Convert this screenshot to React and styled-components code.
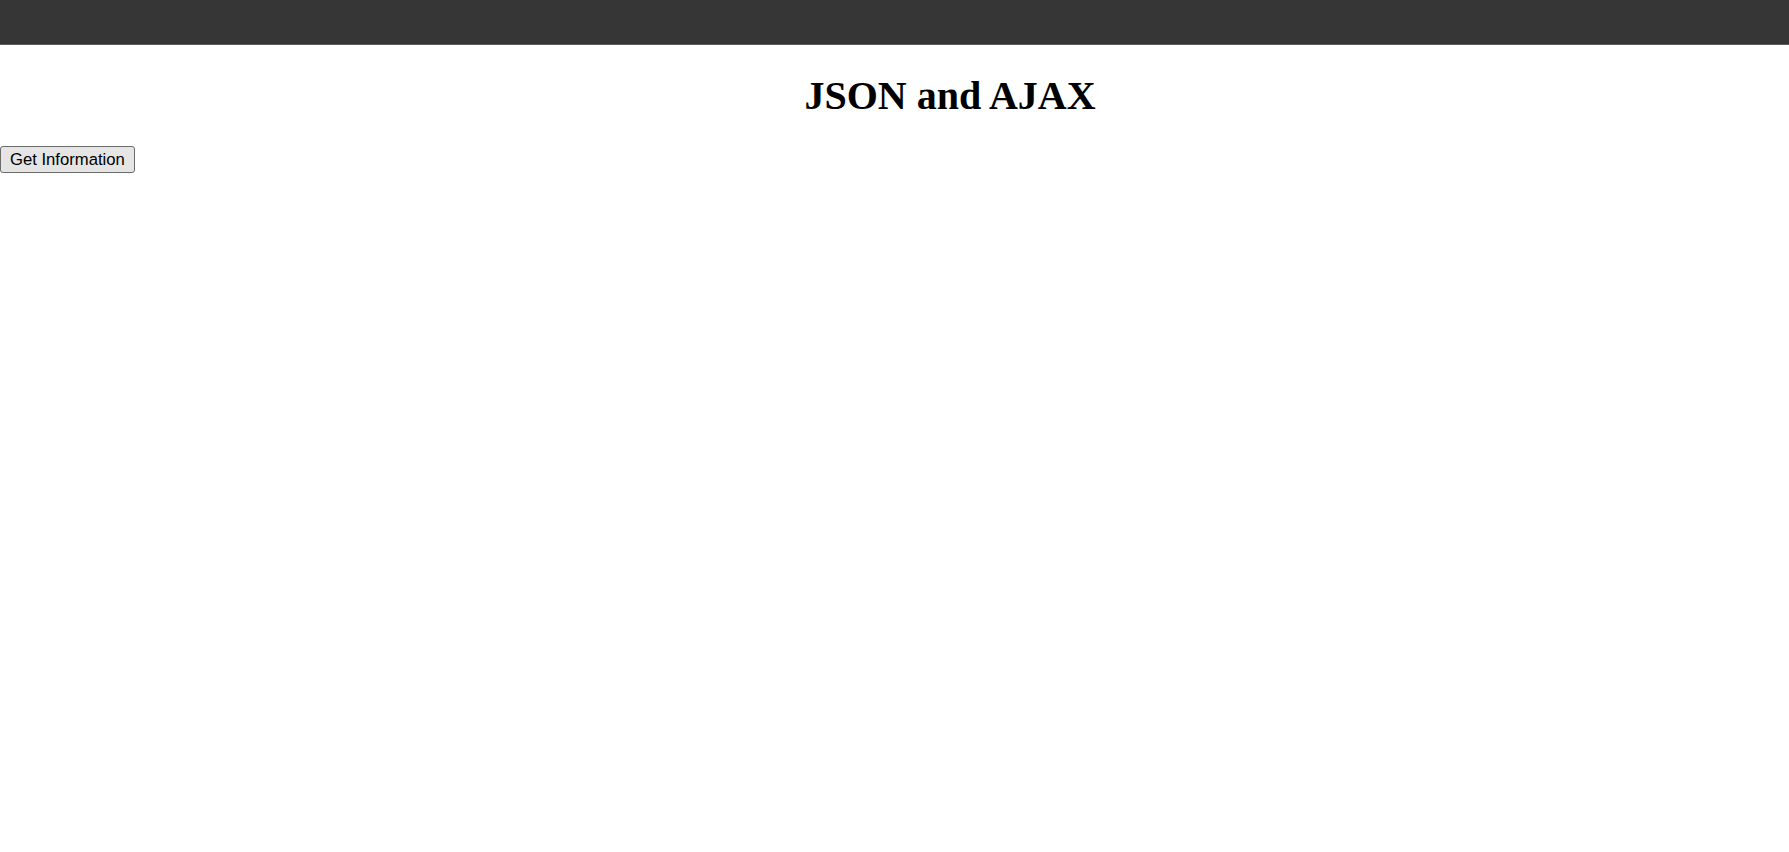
import React from "react";
import styled, { createGlobalStyle } from "styled-components";

const Global = createGlobalStyle`
  html, body { margin: 0; padding: 0; background: #ffffff; }
  body { font-family: "Liberation Serif", "Times New Roman", serif; font-size: 20px; }
`;

const TopBar = styled.header`
  height: 44px;
  background: #363636;
  border-bottom: 1px solid #5c5c5c;
`;

const Main = styled.main`
  display: flex;
  flex-direction: column;
  align-items: flex-start;
`;

const Title = styled.h1`
  align-self: stretch;
  margin: 29px 0 28px;
  padding-left: 111px;
  text-align: center;
  font-family: "Liberation Serif", "Times New Roman", serif;
  font-weight: bold;
  font-size: 40px;
  line-height: 44px;
  color: #000;
`;

const ActionButton = styled.button`
  height: 27px;
  padding: 0 9px;
  margin: 0;
  border: 1px solid #6b6b6b;
  border-radius: 3px;
  background: #e5e5e5;
  color: #000;
  font-family: "Liberation Sans", Arial, sans-serif;
  font-size: 16.67px;
  line-height: 19px;
  cursor: pointer;
`;

export default function App() {
  return (
    <>
      <Global />
      <TopBar />
      <Main>
        <Title>JSON and AJAX</Title>
        <ActionButton>Get Information</ActionButton>
      </Main>
    </>
  );
}
